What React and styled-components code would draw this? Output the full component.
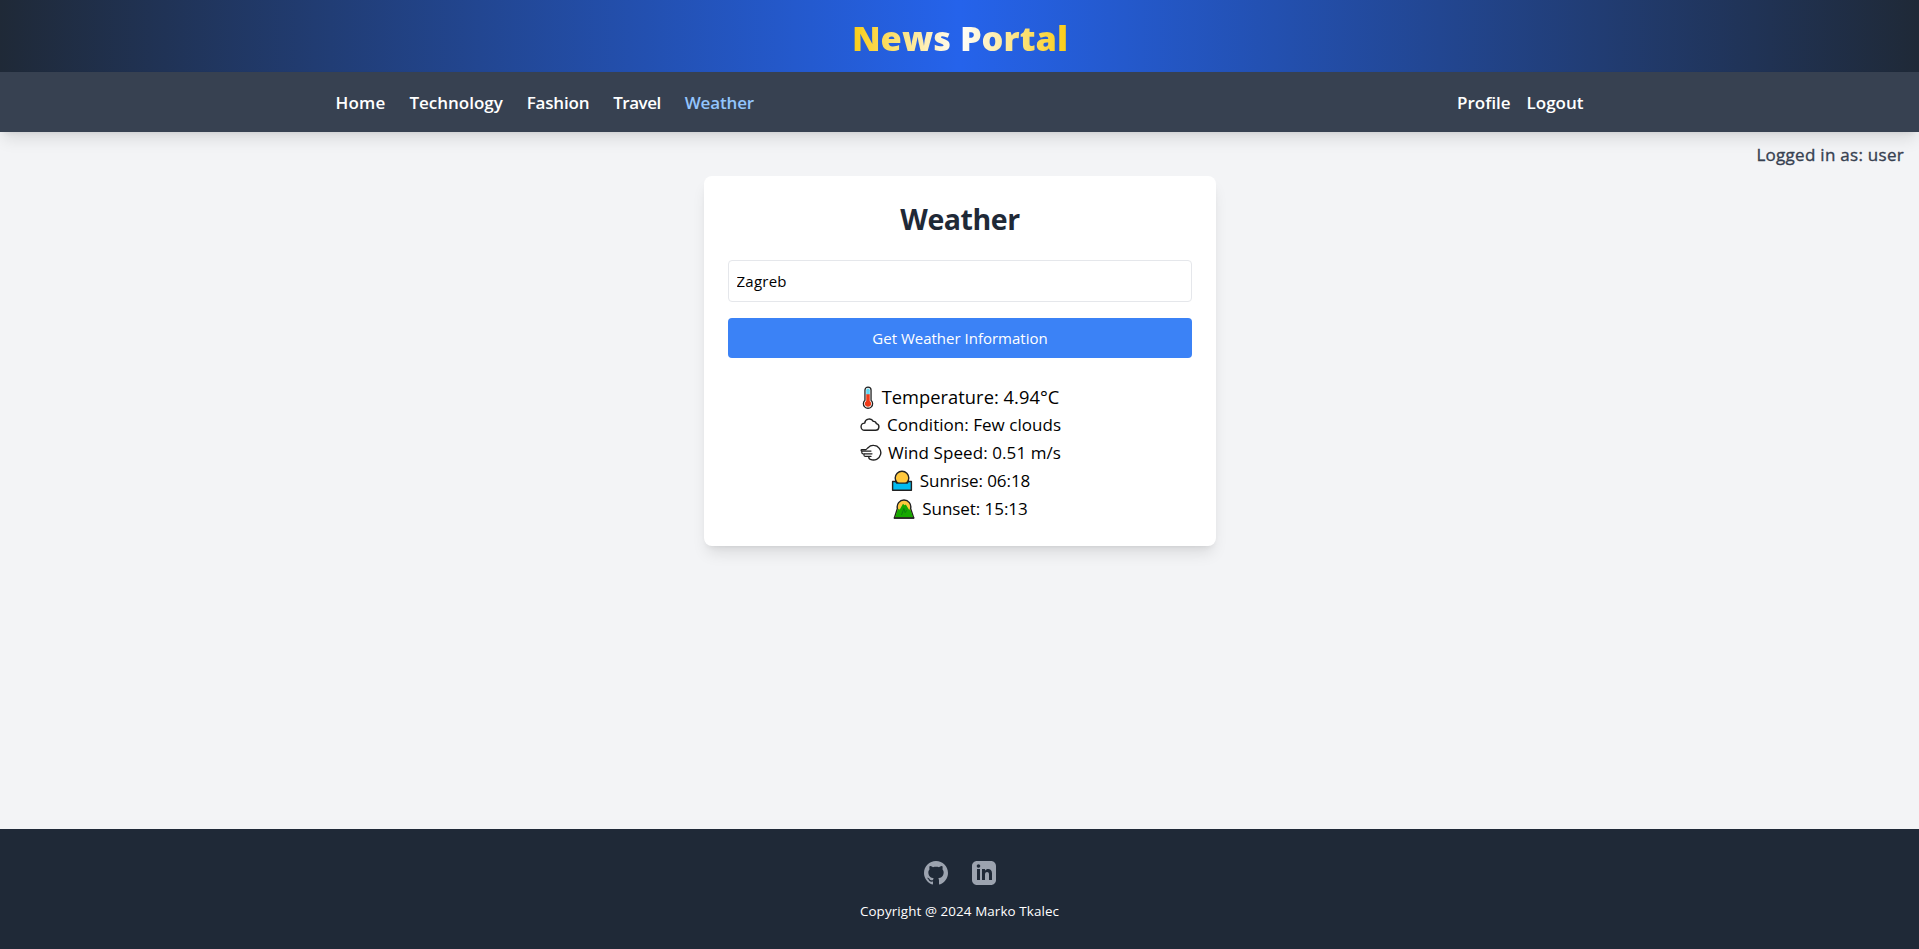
import React from 'react';
import styled, { createGlobalStyle } from 'styled-components';

const GlobalStyle = createGlobalStyle`
  *, *::before, *::after { box-sizing: border-box; }
  body {
    margin: 0;
    font-family: 'Segoe UI', 'Open Sans', 'Noto Sans', sans-serif;
    font-size: 15px;
    line-height: 24px;
    color: #000;
    background: #f3f4f6;
  }
  h1, h2, p, ul { margin: 0; padding: 0; }
  ul { list-style: none; }
  a { color: inherit; text-decoration: none; }
`;

const Page = styled.div`
  min-height: 100vh;
  display: flex;
  flex-direction: column;
  background: #f3f4f6;
`;

const Header = styled.header`
  height: 72px;
  padding: 18px 16px 14px 17px;
  display: flex;
  justify-content: center;
  background: linear-gradient(to right, #1f2937, #2563eb, #1f2937);
`;

const Brand = styled.h1`
  font-size: 34.4px;
  line-height: 40px;
  font-weight: 800;
  color: transparent;
  background: linear-gradient(to right, #facc15, #fff, #facc15);
  background-clip: text;
  -webkit-background-clip: text;
`;

const Nav = styled.nav`
  height: 60px;
  background: #374151;
  box-shadow: 0 10px 15px -3px rgba(0, 0, 0, 0.1), 0 4px 6px -4px rgba(0, 0, 0, 0.1);
`;

const NavInner = styled.div`
  width: 1280px;
  height: 100%;
  margin: 0 auto;
  padding: 1px 16px 0 16px;
  display: flex;
  align-items: center;
  justify-content: space-between;
`;

const NavGroup = styled.ul`
  display: flex;
  gap: ${(p) => p.$gap}px;
`;

const NavLink = styled.a`
  display: block;
  font-size: 17px;
  line-height: 28px;
  font-weight: 600;
  letter-spacing: ${(p) => p.$track || 0}px;
  color: ${(p) => (p.$active ? '#93c5fd' : '#fff')};
`;

const Session = styled.p`
  padding: 9px 15px 0;
  text-align: right;
  font-size: 17px;
  line-height: 28px;
  font-weight: 500;
  letter-spacing: 0.28px;
  color: #374151;
  -webkit-text-stroke: 0.35px #374151;
`;

const Main = styled.main`
  flex: 1;
  padding-top: 7px;
`;

const Card = styled.section`
  width: 512px;
  height: 370px;
  margin: 0 auto;
  padding: 25px 24px 24px;
  border-radius: 8px;
  background: #fff;
  box-shadow: 0 10px 15px -3px rgba(0, 0, 0, 0.1), 0 4px 6px -4px rgba(0, 0, 0, 0.1);
`;

const CardTitle = styled.h2`
  margin-bottom: 23px;
  padding-left: 1px;
  text-align: center;
  font-size: 28.5px;
  line-height: 36px;
  font-weight: 700;
  letter-spacing: -0.45px;
  color: #1f2937;
`;

const CityInput = styled.input`
  display: block;
  width: 100%;
  height: 42px;
  margin-bottom: 16px;
  padding: 8px;
  border: 1px solid #e5e7eb;
  border-radius: 4px;
  font: inherit;
  letter-spacing: 0.25px;
  color: #000;
  outline: none;
`;

const SubmitButton = styled.button`
  display: block;
  width: 100%;
  height: 40px;
  padding: 8px 8px 8px 9px;
  border: 0;
  border-radius: 4px;
  font: inherit;
  color: #fff;
  background: #3b82f6;
`;

const Readings = styled.div`
  margin-top: 25px;
  padding-left: 2px;
`;

const Reading = styled.p`
  display: flex;
  justify-content: center;
  align-items: center;
  gap: ${(p) => p.$gap || 7}px;
  font-size: ${(p) => (p.$large ? 18.3 : 17)}px;
  line-height: 28px;
  letter-spacing: ${(p) => p.$track || 0}px;
`;

const Glyph = styled.svg`
  flex: none;
  display: block;
`;

const Footer = styled.footer`
  height: 120px;
  padding-top: 32px;
  display: flex;
  flex-direction: column;
  align-items: center;
  gap: 16px;
  background: #1f2937;
  color: #fff;
  font-size: 13.4px;
  line-height: 20px;
  letter-spacing: 0.1px;
`;

const SocialLinks = styled.div`
  display: flex;
  gap: 24px;
  color: #9ca3af;
`;

const outline = { stroke: '#222', strokeWidth: 1.4, strokeLinejoin: 'round', strokeLinecap: 'round' };

const Thermometer = () => (
  <Glyph width="12" height="23" viewBox="0 0 13 24">
    <path d="M3.2 4a3.3 3.3 0 0 1 6.6 0v10.9a5 5 0 1 1-6.6 0z" fill="#fff" {...outline} />
    <path d="M4.6 4.2a1.9 1.9 0 0 1 3.8 0V9H4.6z" fill="#61d7f2" />
    <path d="M4.6 8.5h3.8v7.2a3.5 3.5 0 1 1-3.8 0z" fill="#f03a17" />
  </Glyph>
);

const Cloud = () => (
  <Glyph width="20" height="14" viewBox="0 0 20 14">
    <path d="M4.6 12.3h10.8a3.4 3.4 0 0 0 .9-6.7 2.7 2.7 0 0 0-2.6-2.2h-.4a4.6 4.6 0 0 0-8.6 1.7 3.6 3.6 0 0 0-.1 7.2z" fill="#fff" {...outline} />
  </Glyph>
);

const Wind = () => (
  <Glyph width="22" height="18" viewBox="0 0 22 18">
    <path d="M8.2 3.6C9.6 2 11.6 1.2 13.8 1.4a7.3 7.3 0 1 1-3.4 13.9c-1.2-.5-1.9-1.4-1.4-2.4" fill="none" {...outline} />
    <path d="M8.2 3.6 6 5.6H1.8c-1 0-1 1.5 0 1.5H11M4.2 9.8H12M1.8 7.1v1.4q0 1.3 1.4 1.3M4 9.8v1.4q0 1.2 1.4 1.2H11" fill="none" {...outline} strokeWidth="1.2" />
  </Glyph>
);

const Sunrise = () => (
  <Glyph width="22" height="22" viewBox="0 0 22 22">
    <circle cx="11" cy="8" r="6.8" fill="#ffc83d" {...outline} />
    <path d="M1.6 11.5h3l1.2 1.6h10.4l1.2-1.6h3v8.7H1.6z" fill="#00bcf2" {...outline} />
  </Glyph>
);

const Sunset = () => (
  <Glyph width="22" height="22" viewBox="0 0 22 22">
    <path d="M4.4 10.5A6.8 6.8 0 1 1 17.6 10.5L20.7 20H1.4z" fill="#ffc83d" {...outline} />
    <path d="M2 19.4 4.9 11l1.9.4L10 5.8l1.6 1.5 1.2-.8 3.1 5.1 1.4-.2 2.9 8z" fill="#16a800" />
    <path d="m8.5 17 2.4-6.5 1.3 4.1 1.5-2.3" fill="none" stroke="#0c7d10" strokeWidth="1" />
    <path d="M1.4 20h19.3" fill="none" {...outline} />
  </Glyph>
);

const GithubIcon = () => (
  <Glyph width="24" height="24" viewBox="0 0 24 24" fill="currentColor">
    <path d="M12 0C5.37 0 0 5.373 0 12c0 5.302 3.438 9.8 8.207 11.387.599.111.793-.261.793-.577v-2.234c-3.338.726-4.033-1.416-4.033-1.416-.546-1.387-1.333-1.756-1.333-1.756-1.089-.745.083-.729.083-.729 1.205.084 1.839 1.237 1.839 1.237 1.07 1.834 2.807 1.304 3.492.997.107-.775.418-1.305.762-1.604-2.665-.305-5.467-1.334-5.467-5.931 0-1.311.469-2.381 1.236-3.221-.124-.303-.535-1.524.117-3.176 0 0 1.008-.322 3.301 1.23.957-.266 1.983-.399 3.003-.404 1.02.005 2.047.138 3.006.404 2.291-1.552 3.297-1.23 3.297-1.23.653 1.653.242 2.874.118 3.176.77.84 1.235 1.911 1.235 3.221 0 4.609-2.807 5.624-5.479 5.921.43.372.823 1.102.823 2.222v3.293c0 .319.192.694.801.576C20.566 21.797 24 17.3 24 12c0-6.627-5.373-12-12-12z" />
  </Glyph>
);

const LinkedinIcon = () => (
  <Glyph width="24" height="24" viewBox="0 0 24 24" fill="currentColor">
    <path d="M19 0H5C2.239 0 0 2.239 0 5v14c0 2.761 2.239 5 5 5h14c2.762 0 5-2.239 5-5V5c0-2.761-2.238-5-5-5zM8 19H5V8h3v11zM6.5 6.732c-.966 0-1.75-.79-1.75-1.764S5.534 3.204 6.5 3.204s1.75.79 1.75 1.764-.783 1.764-1.75 1.764zM20 19h-3v-5.604c0-3.368-4-3.113-4 0V19h-3V8h3v1.765c1.396-2.586 7-2.777 7 2.476V19z" />
  </Glyph>
);

const sections = [
  { name: 'Home', track: 0.2 },
  { name: 'Technology', track: -0.02 },
  { name: 'Fashion', track: -0.2 },
  { name: 'Travel', track: -0.5 },
  { name: 'Weather', track: -0.15 },
];
const account = ['Profile', 'Logout'];

export default function App() {
  return (
    <Page>
      <GlobalStyle />
      <Header>
        <Brand>News Portal</Brand>
      </Header>
      <Nav>
        <NavInner>
          <NavGroup $gap={24}>
            {sections.map(({ name, track }) => (
              <li key={name}>
                <NavLink href="#" $track={track} $active={name === 'Weather'}>{name}</NavLink>
              </li>
            ))}
          </NavGroup>
          <NavGroup $gap={16}>
            {account.map((name) => (
              <li key={name}>
                <NavLink href="#">{name}</NavLink>
              </li>
            ))}
          </NavGroup>
        </NavInner>
      </Nav>
      <Session>Logged in as: user</Session>
      <Main>
        <Card>
          <CardTitle>Weather</CardTitle>
          <CityInput defaultValue="Zagreb" aria-label="City" />
          <SubmitButton type="button">Get Weather Information</SubmitButton>
          <Readings>
            <Reading $large $gap={8} $track={0.04}><Thermometer />Temperature: 4.94°C</Reading>
            <Reading $track={0.03}><Cloud />Condition: Few clouds</Reading>
            <Reading $gap={6} $track={0.08}><Wind />Wind Speed: 0.51 m/s</Reading>
            <Reading $track={-0.06}><Sunrise />Sunrise: 06:18</Reading>
            <Reading $track={-0.06}><Sunset />Sunset: 15:13</Reading>
          </Readings>
        </Card>
      </Main>
      <Footer>
        <SocialLinks>
          <GithubIcon />
          <LinkedinIcon />
        </SocialLinks>
        <p>Copyright @ 2024 Marko Tkalec</p>
      </Footer>
    </Page>
  );
}
